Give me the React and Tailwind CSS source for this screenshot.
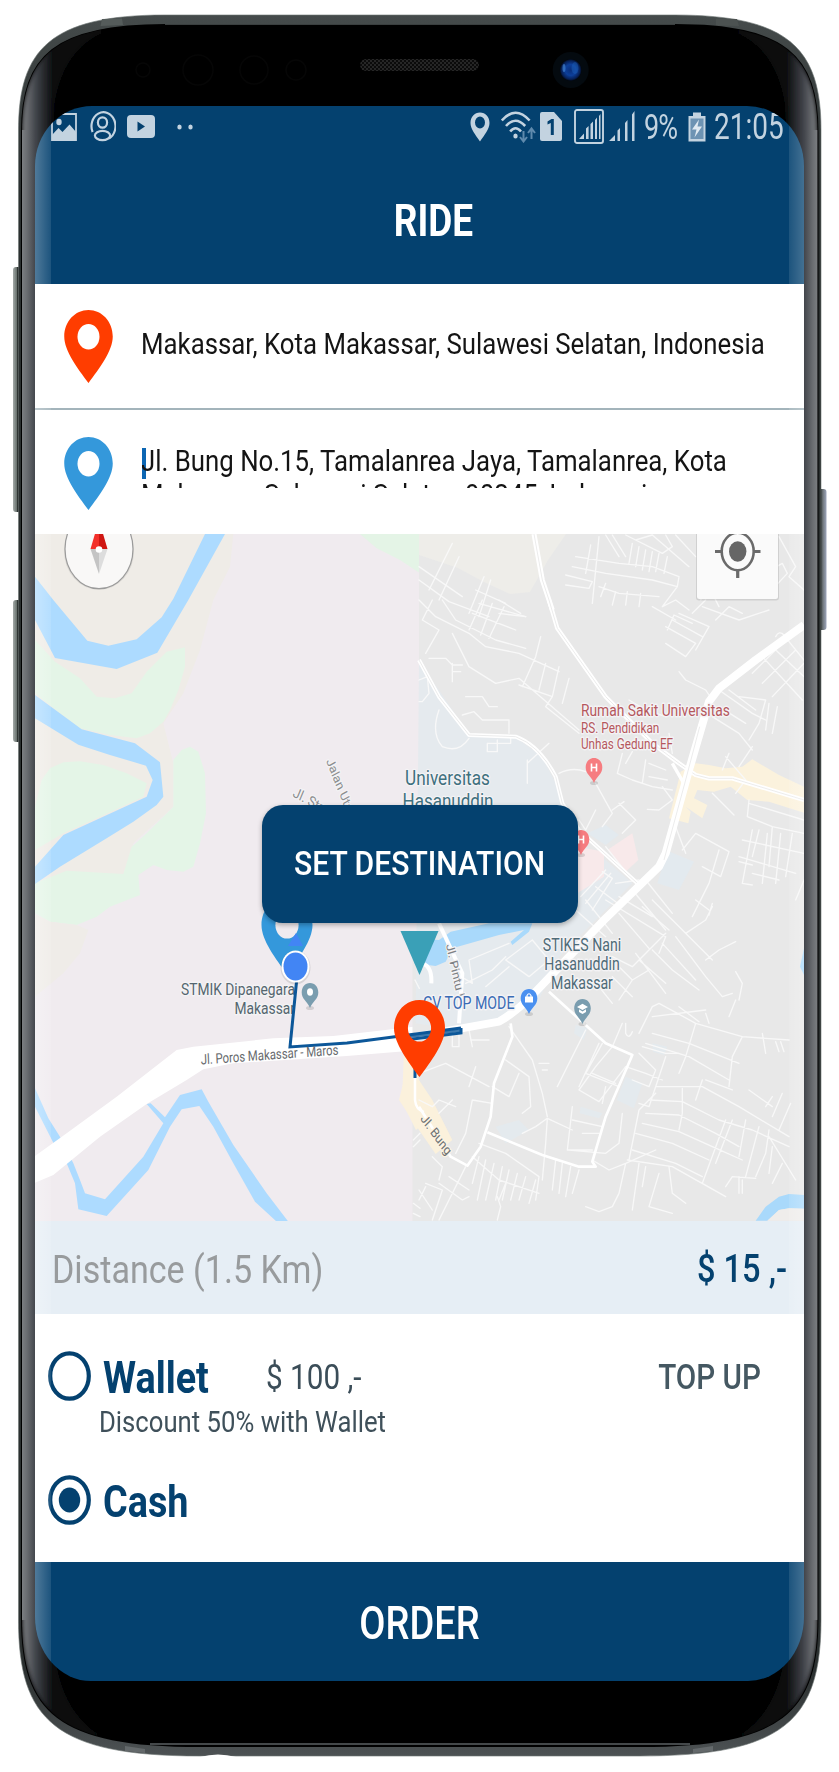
import React from "react";

const ROBOTO = "font-[Roboto,'Liberation_Sans',sans-serif]";

function PinShape({ x = 0, y = 0, w = 48.5, h = 73, fill, hole = "#ffffff" }) {
  return (
    <g transform={`translate(${x} ${y}) scale(${w / 48.5} ${h / 73})`}>
      <path
        d="M24.25 0C10.9 0 0 11.4 0 26.5C0 41 13.5 58.5 24.25 73C35 58.5 48.5 41 48.5 26.5C48.5 11.4 37.6 0 24.25 0Z"
        fill={fill}
      />
      <ellipse cx="24.25" cy="26.7" rx="11" ry="12.7" fill={hole} />
    </g>
  );
}

function PhoneFrame() {
  const outer =
    "M18.5 130C18.5 50 50 15 165 15H675C790 15 821 50 821 130V1620C821 1720 784 1756 640 1756H200C55 1756 18.5 1720 18.5 1620Z";
  const inner =
    "M22 132C22 56 55 25 165 25H675C785 25 817.5 56 817.5 132V1618C817.5 1712 782 1746 640 1746H200C58 1746 22 1712 22 1618Z";
  const glow =
    "M22 132C22 72 45 30 112 29C75 42 52 72 52 140V1610C52 1680 68 1718 106 1739C46 1728 22 1690 22 1618Z";
  return (
    <svg className="absolute left-0 top-0 h-[1772px] w-[839px]" viewBox="0 0 839 1772">
      <defs>
        <linearGradient id="edge" gradientUnits="userSpaceOnUse" x1="22" x2="54" y1="0" y2="0">
          <stop offset="0" stopColor="#7b7e81" />
          <stop offset="0.15" stopColor="#6a6d71" />
          <stop offset="0.42" stopColor="#42454b" />
          <stop offset="1" stopColor="#08090a" />
        </linearGradient>
        <linearGradient id="rim" x1="0" x2="0" y1="0" y2="1">
          <stop offset="0" stopColor="#454b4b" />
          <stop offset="0.1" stopColor="#2b3030" />
          <stop offset="0.95" stopColor="#2b3030" />
          <stop offset="1" stopColor="#4d5254" />
        </linearGradient>
        <linearGradient id="btn" x1="0" x2="1" y1="0" y2="0">
          <stop offset="0" stopColor="#a4aaa8" />
          <stop offset="0.45" stopColor="#6b7470" />
          <stop offset="0.6" stopColor="#1c201f" />
          <stop offset="1" stopColor="#3a403e" />
        </linearGradient>
        <linearGradient id="btnR" x1="1" x2="0" y1="0" y2="0">
          <stop offset="0" stopColor="#9da6bb" />
          <stop offset="0.45" stopColor="#6d7478" />
          <stop offset="0.7" stopColor="#15181a" />
          <stop offset="1" stopColor="#2a2e30" />
        </linearGradient>
        <radialGradient id="lens">
          <stop offset="0" stopColor="#0a2f7c" />
          <stop offset="0.5" stopColor="#0d3f9a" />
          <stop offset="0.85" stopColor="#061f55" />
          <stop offset="1" stopColor="#02060c" />
        </radialGradient>
        <filter id="soft" x="-20%" width="140%" y="-2%" height="104%">
          <feGaussianBlur stdDeviation="2" />
        </filter>
        <pattern id="mesh" width="4" height="4" patternUnits="userSpaceOnUse">
          <rect width="4" height="4" fill="#262626" />
          <rect width="2" height="2" fill="#0b0b0b" />
          <rect x="2" y="2" width="2" height="2" fill="#0b0b0b" />
        </pattern>
        <clipPath id="innerClip">
          <path d={inner} />
        </clipPath>
      </defs>
      <rect x="13" y="267" width="8" height="245" rx="3" fill="url(#btn)" />
      <rect x="13" y="600" width="8" height="142" rx="3" fill="url(#btn)" />
      <rect x="818" y="489" width="8.5" height="141" rx="3" fill="url(#btnR)" />
      <path d={outer} fill="url(#rim)" />
      <path d={outer} fill="none" stroke="#6c7573" strokeWidth="1" opacity="0.6" />
      <path d="M102 19L122 18.5L123 25L100.500 26Z" fill="#555c5b" />
      <path d="M716 18.5L737 19L739 26L716 25.500Z" fill="#4c5251" />
      <path d="M125 1746L145 1749L145 1753L125 1751Z" fill="#64696b" />
      <path d="M693 1749L713 1746L713 1751L693 1753Z" fill="#64696b" />
      <path d="M200 1757Q218 1752 236 1757Z" fill="#ffffff" />
      <path d={inner} fill="#000000" stroke="#000000" strokeWidth="2" />
      <g clipPath="url(#innerClip)">
        <path d={glow} fill="url(#edge)" filter="url(#soft)" />
        <path d={glow} fill="url(#edge)" filter="url(#soft)" transform="translate(839.500 0) scale(-1 1)" />
        <rect x="22" y="130" width="14" height="1490" fill="url(#edge)" />
        <rect x="22" y="130" width="14" height="1490" fill="url(#edge)" transform="translate(839.500 0) scale(-1 1)" />
      </g>
      <path d="M165 24.500H675" stroke="#3a3f3f" strokeWidth="1" />
      <path d="M150 1744H690" stroke="#5b6063" strokeWidth="1.500" />
      <rect x="360" y="59" width="119" height="12" rx="6" fill="url(#mesh)" />
      <g fill="none" stroke="#060606" strokeWidth="1.500">
        <circle cx="143" cy="70" r="7" />
        <circle cx="198" cy="70" r="15" />
        <circle cx="254" cy="70" r="14" />
        <circle cx="296" cy="70" r="10" />
      </g>
      <circle cx="570.700" cy="70" r="18" fill="#040a0f" />
      <circle cx="570.700" cy="70" r="11" fill="url(#lens)" />
      <ellipse cx="575" cy="68" rx="3.500" ry="6" fill="#1e63bd" opacity="0.45" />
      <ellipse cx="564" cy="68" rx="1.500" ry="4" fill="#4a8fe0" opacity="0.6" />
    </svg>
  );
}

function StatusBar() {
  const c = "#c3d3e0";
  const bg = "#04416f";
  return (
    <div className="flex h-[41px] items-center pl-[16px] pr-[19px] text-[#c3d3e0]">
      <svg className="h-[28px] w-[26px] shrink-0" viewBox="0 0 26 28">
        <path d="M1 1H25V27H1Z" fill="none" stroke={c} strokeWidth="1.800" />
        <ellipse cx="8" cy="9" rx="2.700" ry="3.200" fill={c} />
        <path d="M1 27V22L7.500 15L11.500 19L18.500 11.500L25 19V27Z" fill={c} />
      </svg>
      <svg className="ml-[12px] h-[31px] w-[27px] shrink-0" viewBox="0 0 27 31">
        <path d="M3.600 21A12 13.900 0 1 1 20 27.500" fill="none" stroke={c} strokeWidth="2.200" />
        <ellipse cx="13.500" cy="11.500" rx="4.600" ry="5.200" fill="none" stroke={c} strokeWidth="2.200" />
        <ellipse cx="13.500" cy="24.500" rx="7.600" ry="4.600" fill="none" stroke={c} strokeWidth="2.200" />
      </svg>
      <svg className="ml-[11px] h-[23px] w-[28px] shrink-0" viewBox="0 0 28 23">
        <rect width="28" height="23" rx="4" fill={c} />
        <path d="M10.500 6.500L18 11.500L10.500 16.500Z" fill={bg} />
      </svg>
      <svg className="ml-[22px] h-[6px] w-[16px] shrink-0" viewBox="0 0 16 6">
        <ellipse cx="2.500" cy="3" rx="2.200" ry="2.600" fill={c} />
        <ellipse cx="13.500" cy="3" rx="2.200" ry="2.600" fill={c} />
      </svg>
      <svg className="ml-auto h-[30px] w-[20px] shrink-0" viewBox="0 0 20 30">
        <path
          fillRule="evenodd"
          d="M10 0.500C4.500 0.500 0.500 5 0.500 11C0.500 17 5.500 23 10 29.500C14.500 23 19.500 17 19.500 11C19.500 5 15.500 0.500 10 0.500ZM10 4.500A5 6 0 1 1 10 16.500A5 6 0 1 1 10 4.500Z"
          fill={c}
        />
      </svg>
      <svg className="ml-[11px] h-[32px] w-[35px] shrink-0" viewBox="0 0 35 32">
        <g fill="none" stroke={c} strokeWidth="2.600">
          <path d="M0.800 9.500Q14.500 -6 28.600 9.500" />
          <path d="M5 15Q14.500 4.500 24.200 15" />
          <path d="M9.200 20.500Q14.500 14 20 20.500" />
        </g>
        <ellipse cx="14.500" cy="25" rx="2.200" ry="2.500" fill={c} />
        <g stroke="#5f8aad" strokeWidth="2" fill="none">
          <path d="M22.500 20V30M19 26L22.500 30.500L26 26" />
          <path d="M30.500 28V18M27 22L30.500 17.500L34 22" />
        </g>
      </svg>
      <svg className="ml-[4px] h-[29px] w-[22px] shrink-0" viewBox="0 0 22 29">
        <path d="M2 0H14L22 9V27Q22 29 20 29H2Q0 29 0 27V2Q0 0 2 0Z" fill={c} />
        <path d="M7.500 9.500L11.500 7H13.800V23H10.800V11L7.500 12.500Z" fill={bg} />
      </svg>
      <svg className="ml-[12px] h-[35px] w-[30px] shrink-0" viewBox="0 0 30 35">
        <rect x="1" y="1" width="28" height="33" rx="2" fill="none" stroke={c} strokeWidth="1.900" />
        <path d="M5 30L10 24.500V30ZM12 30V19.500L14.600 17V30ZM16.500 30V15L19 12.500V30ZM21 30V11L23 8.500V30ZM25 30V7L26.500 5V30Z" fill={c} />
      </svg>
      <svg className="ml-[5px] h-[31px] w-[26px] shrink-0" viewBox="0 0 26 31">
        <path d="M0 30L6 24V30ZM8.500 30V19.500L11 17V30ZM16 30V12L18.500 9V30ZM23 30V3.500L25.500 0V30Z" fill={c} />
      </svg>
      <span className="ml-[9px] w-[36px] shrink-0 scale-y-[1.32] whitespace-nowrap text-[27px] leading-[28px] tracking-[-1px]">
        9%
      </span>
      <svg className="ml-[8px] h-[30px] w-[18px] shrink-0" viewBox="0 0 18 30">
        <path d="M0.500 4H5V0.500H13V4H17.500V29.500H0.500Z" fill={c} />
        <path d="M2.500 6.500H15.500V27H2.500Z" fill="#6d93b3" />
        <path d="M11 7.500L4 17.500H8.500L6.500 25.500L14 14.500H9.500Z" fill="#dfe9f1" />
      </svg>
      <span className="ml-[8px] w-[71px] shrink-0 scale-y-[1.32] whitespace-nowrap text-[28px] leading-[28px]">
        21:05
      </span>
    </div>
  );
}

function Label({ x, y, size, sy = 1.25, fill, anchor = "start", rotate = 0, weight = 400, halo = "#f4f3f5", children }) {
  return (
    <text
      transform={`translate(${x} ${y}) scale(1 ${sy}) rotate(${rotate})`}
      fontSize={size}
      fontWeight={weight}
      textAnchor={anchor}
      fill={fill}
      stroke={halo}
      strokeWidth="2.200"
      strokeLinejoin="round"
      paintOrder="stroke"
    >
      {children}
    </text>
  );
}

function PoiPin({ x, y, fill, children }) {
  return (
    <g transform={`translate(${x} ${y})`}>
      <ellipse cx="0" cy="25" rx="4" ry="2" fill="#000000" opacity="0.12" />
      <path d="M0 0C-5 0 -8.300 4 -8.300 9.500C-8.300 16 -3 18 0 25C3 18 8.300 16 8.300 9.500C8.300 4 5 0 0 0Z" fill={fill} />
      {children}
    </g>
  );
}

function MapView() {
  return (
    <svg className="h-[687px] w-[769px]" viewBox="35 534 769 687">
      <rect x="35" y="534" width="769" height="687" fill="#f0ebef" />

      <g transform="translate(0 280) scale(0.33333)">
        <path d="M105 762H700L690 860L640 960L600 1110L550 1240L490 1330L520 1450L520 1580L400 1690L380 1780L105 1900Z" fill="#efece7" />
        <path d="M1080 762H1260V880L1200 840L1130 805Z" fill="#e4f4e6" />
      </g>
      <g transform="translate(0 600) scale(0.33333)">
        <path d="M105 120L165 185L240 235L290 290L345 295L395 280L440 215L500 155L555 142L555 200L535 270L510 330L490 365L450 400L410 415L330 405L240 385L180 340L105 280Z" fill="#e4f5e7" />
        <path d="M150 505L190 487L240 484L310 495L380 520L440 550L430 590L300 650L190 700L105 750V620L125 540Z" fill="#e4f5e7" />
        <path d="M545 450L570 440L595 455L615 520L618 640L600 730L580 800L550 815L500 810L460 795L415 825L420 885L330 920L290 950L230 975L150 965L105 940V850L200 812L370 822L395 740L440 700L520 620L520 480Z" fill="#e4f5e7" />
        <path d="M105 942L150 965L230 975L265 990L240 1060L190 1120L105 1190Z" fill="#efece8" />
        <path d="M105 -70L160 0L262 122L325 137L410 118L485 52L520 -4L615 -198L675 -198L565 0L472 158L350 207L165 174L105 60Z" fill="#addbff" />
        <path d="M105 285L245 388L405 430L480 487L490 590L470 615L400 665L320 715L180 800L105 852V800L190 705L440 590L458 540L438 497L330 465L235 434L105 355Z" fill="#addbff" />
      </g>

      <g transform="translate(0 900) scale(0.33333)">
        <path d="M105 565L145 655L180 710L220 790L240 840L255 880L315 898L430 770L490 670L440 612L452 610L495 652L540 585L605 568L625 605L700 735L800 880L865 965H830L765 905L700 790L640 680L598 618L545 628L510 680L445 810L320 948L235 928L225 850L200 790L160 728L105 620Z" fill="#addbff" />
        <path d="M105 768L200 700L350 590L530 450L580 440L820 415L1000 408L1260 378V450L1040 468L700 490L610 508L560 540L440 612L300 710L160 825L105 848Z" fill="#ffffff" />
      </g>

      <path d="M419 534H804V1221H412.500V960H419Z" fill="#e8e8e8" />
      <path d="M419 534H566L548 560L530 592L510 594L484 582L458 568L419 555Z" fill="#eeede9" />

      <g transform="translate(419 600) scale(0.33333)">
        <path d="M0 190L60 270L150 405L290 412L370 470L415 560L440 700L560 780L640 850L420 1070L350 1220L120 1290L-10 1270Z" fill="#e5eaee" />
        <path d="M830 490L870 495L920 505L970 500L1000 478L1080 525L1155 560V638L1050 605L985 600L935 560L885 575L835 570L825 595L865 615L850 655L800 620L815 635L808 670L750 655L785 515Z" fill="#fbf2dd" />
        <path d="M475 740L555 755V830L475 880ZM565 750L640 700L658 780L620 815Z" fill="#f8e9ea" />
        <path d="M505 700L560 675L600 705L560 735ZM745 752L825 785L780 870L715 850Z" fill="#e3eaef" />
      </g>
      <g transform="translate(419 900) scale(0.33333)">
        <path d="M95 95L210 70H340L330 95L280 135L275 125L315 90L240 105L100 145L80 185L50 198L-15 190V115L60 120Z" fill="#a9d9fb" />
        <path d="M1155 145L1143 200L1155 225Z" fill="#a9d9fb" />
        <path d="M1010 962L1040 920L1080 890L1110 882L1155 885V926L1110 925L1080 930L1045 962Z" fill="#a9d9fb" />
        <path d="M1045 962L1080 930L1110 925L1155 926V962Z" fill="#efedeb" />
        <path d="M-30 480L0 540L40 600L100 720L50 762L0 690L-60 600Z" fill="#fbf1dc" />
        <path d="M620 530L670 550L645 625L593 600ZM700 430L745 440L735 465L702 455ZM485 620L550 640L540 655L482 640ZM470 375L505 385L495 420L465 400ZM230 680L300 660L330 690L260 730Z" fill="#e4eaee" />
      </g>
      <path d="M404 1050L412 1050L428 1120L416 1130L402 1102Z" fill="#fbf1dc" />

      <g fill="none" stroke="#f8f8f8" strokeWidth="4" strokeLinejoin="round" strokeLinecap="round">
        <g transform="translate(419 280) scale(0.33333)">
          <path d="M100 790L30 930M120 830L60 960M0 860L130 950M195 890L150 1000M215 900L180 1010M0 900L90 965L210 1010M170 930L260 970M240 1000L320 1010" />
          <path d="M540 770L520 970M515 795L500 880M470 830L600 850L700 860L780 890M460 860L560 880L700 900L775 920M440 885L520 905L510 925L440 915M540 920L600 940L720 950M560 910L545 950M590 935L580 975M625 935L620 975M665 940L660 980M560 765L600 830M580 765L620 830M640 790L630 850M660 800L650 860M680 810L670 870M700 815L690 875M720 820L710 875M745 830L735 880M620 765L730 820L760 800L740 765M780 890L775 920L730 980L770 960L810 990M700 765L810 860M770 765L830 830M650 780L700 765M845 960L900 870L1000 840M1080 770L1130 860L1110 890L1155 930M900 980L860 900M1000 900L1090 850L1105 880L1040 950" />
        </g>
        <g transform="translate(419 600) scale(0.33333)">
          <path d="M0 0L50 50L150 100L200 140L300 160L420 215M40 0L10 60L60 90L20 160M70 0L110 60L230 120L320 145M150 90L190 0M185 105L220 10M210 115L255 20M160 40L290 90M180 10L320 50M240 0L305 40M365 110L350 170L310 260M380 190L360 270M420 200L400 290M450 235L430 310M100 100L150 200L230 250L300 235L480 390M300 255L400 290L380 320L480 400M30 175H80L100 195H130M100 190V245M100 215H125M140 290H190L210 320H235M130 345L165 335L190 360H270V400M205 430V455H235V420M205 430H275V415M60 330Q35 400 70 440Q120 460 150 415M325 480V550M390 430L325 490M0 240L25 230L30 280L10 305H0" />
          <path d="M740 80L830 130L800 170L740 130M760 60L850 110M780 40L870 80L830 150M745 90L765 45L820 70M700 20L770 60M820 40L860 0M850 20L960 60L1050 30M890 60L930 20L970 40M780 215L800 240L860 270L880 300M1030 170L1150 300M1060 140L1155 230M1090 100L1155 180M1070 110Q1080 90 1095 105M1000 220L1090 130M1030 250L1130 150M1060 290L1155 190M900 270L1000 340L1040 360M930 270L1010 330M960 290L1040 300L1020 370L990 420M880 350L960 400L1000 450M900 320L980 370M1050 310L1040 390M1075 320L1060 400M420 520Q460 500 500 515M530 550L580 640L550 680M600 610L650 660L610 700M580 630L615 605M480 660L500 690L530 630M610 460L595 520L640 540L700 560L760 570M640 455L620 490M680 480L670 550M690 490L740 510M750 400L760 460M630 300L680 330L740 350M690 530L745 540" />
          <path d="M730 560L760 600L720 630L685 628M920 470L980 540L950 580M930 460L910 510M960 500L1000 440M880 580L945 645M990 600L985 650L1060 680L1155 700M990 610L1155 660M770 680L800 760M830 700L930 755L905 830L850 800M830 700L790 750M900 750L870 850L820 950M1000 690L970 850M1020 690L1000 770M1045 700L1030 850M1060 680L1050 800M1085 700L1070 850M1120 700L1100 830M970 720L1155 760M960 770L1130 820M1000 820L1080 840M960 785L1000 795M970 850L1000 855" />
          <path d="M560 810L485 890M575 820L500 910M550 815L580 835L520 930M530 860L610 920M560 740L640 840M590 850L660 840M600 890L700 950M640 870L740 990M680 840L760 940M1130 900L1155 840" />
        </g>
        <g transform="translate(419 900) scale(0.33333)">
          <path d="M500 0L580 100M470 30L560 110M560 0L740 110L720 160M600 40L690 145M740 100L640 200L580 170M670 20L750 90M700 150L760 210L840 270M650 160L740 280M700 0L800 100L860 60L880 20M730 130L830 240M770 110L860 230L910 290L940 280M790 90L880 180M600 200L640 240L600 300M540 260L580 310M580 230L640 290M660 180L740 250M640 240L690 210M860 180L900 150L950 125M880 10L870 45M830 0L870 30M950 215L970 250L960 300M950 300L930 350M660 400L700 320L720 310L830 370L970 410L940 470L930 560M700 350L860 330M830 370L800 470L780 520M700 400L810 430L960 490M680 430L810 470L930 540M780 320L840 365M970 410L1110 420M1030 400L1040 460M1070 425L1080 455M1085 425L1095 455M860 340L870 370" />
          <path d="M660 460L710 510L690 560L640 540M670 440L740 460L780 460M620 500L680 520L730 540M740 470L710 560H850L960 620L1110 710M710 560L690 620L660 610M690 600L790 605L900 660L1000 690L1110 740M680 640L780 645L890 700L960 740M670 670L780 695L880 740L970 780M650 700L760 730L870 780M640 750L770 790L850 830M625 780L760 800L920 890M790 565L790 640L780 690M850 540L830 600M860 540L940 570M920 660L850 850M940 660L890 790M980 660L960 770M1020 680L980 830M1050 690L1040 760L1010 830M1050 710L1130 840M1060 740L1050 820M1090 790L1060 850M850 850L920 890M920 860L940 830L1010 835M960 830V880M970 840V880M1060 590L1040 620M1090 580L1060 650M1115 610L1080 690M990 570L1060 620" />
          <path d="M610 370L580 440L530 500L480 570L540 605L620 500M500 390L415 560M550 430L500 520L600 560M520 520L590 550M560 560L550 610M620 370V400Q630 420 640 395M540 430L480 560M270 380L340 480L370 580L385 650M260 480L330 530L335 620L310 640M220 560L270 590L300 520M385 655L350 680L310 700M385 655L380 730L370 840M385 655L460 690M460 620L445 750H520M460 660L550 680M540 700H490M610 640L600 730L560 760L450 750M520 780L570 810L620 790L710 750M620 790L600 880L580 920L540 935L500 920M660 790L640 930M680 800L670 860M720 820L690 920L760 940M750 800L760 880L800 910M630 780L660 630L710 580M360 490H390M370 510H385M120 400V440H100V400M150 390L160 440M155 420H210M0 520L80 490L210 560M150 560L170 500M160 600L220 610M160 600L140 700L110 760" />
          <path d="M180 770L160 850M200 780L175 900M225 790L200 900M250 800L230 900M270 810L250 900M295 820L275 900M320 830L300 900M350 840L330 910M180 730L260 760L360 830L350 900M160 770L240 840L360 880M410 780L400 870M430 790L420 880M455 800L440 890M480 810L460 880M140 800L90 900L60 960M90 830L150 870M60 850L130 900L150 890M20 850L70 870L40 960M20 860L0 900M0 870L40 930M40 770L70 800L60 840M240 900L260 850M235 960L245 920L235 890M0 600L40 620L60 600L110 620M60 640L100 600M260 180L340 120L390 180L330 230ZM140 250L220 210L260 170M110 220L160 250L150 180L270 130M200 260L270 200" />
        </g>
        <g transform="translate(0 900) scale(0.33333)">
          <path d="M1240 720L1260 700M1240 740L1260 720M1240 910L1260 925M1240 940L1260 950M1245 240L1258 265" />
        </g>
      </g>

      <g fill="none" strokeLinejoin="round">
        <g transform="translate(419 280) scale(0.33333)">
          <path d="M345 762L370 900L400 990" stroke="#ffffff" strokeWidth="15" />
          <path d="M345 762L370 900L400 990" stroke="#ececec" strokeWidth="3" />
        </g>
        <g transform="translate(419 600) scale(0.33333)" stroke="#ffffff">
          <path d="M390 0L415 85L560 290L700 430L780 490L830 525L870 535H940L1155 600" strokeWidth="13" />
          <path d="M390 0L415 85L560 290L700 430L780 490L830 525L870 535H940L1155 600" stroke="#ececec" strokeWidth="3" />
          <path d="M0 180L60 290L150 405L290 410Q360 435 410 530L430 610L480 690L655 850" strokeWidth="12" />
          <path d="M0 180L60 290L150 405L290 410Q360 435 410 530L430 610L480 690L655 850" stroke="#ececec" strokeWidth="3" />
          <path d="M1155 75L1010 180L900 265L870 305L810 510L740 760L720 800L560 955L350 1175Q300 1230 240 1265L-10 1310" strokeWidth="24" />
          <path d="M845 370L800 530L740 770L710 810L660 855M760 490L800 560" stroke="#ffffff" strokeWidth="10" />
          <path d="M842 380L800 540L735 780" stroke="#ececec" strokeWidth="3" />
        </g>
        <g transform="translate(419 900) scale(0.33333)" stroke="#ffffff">
          <path d="M0 190Q40 190 37 250M60 70L130 220L120 370" strokeWidth="12" />
          <path d="M390 275L560 430L640 465L560 650L520 785L530 800L480 800L370 765L205 697M275 370L280 410L225 550L215 650L185 740L145 797L95 770L0 620" strokeWidth="8" />
        </g>
        <path d="M415 1078V1100Q416 1110 424 1112" stroke="#ffffff" strokeWidth="2.500" />
      </g>

      <Label x="326" y="761" size="11.600" sy="1.170" rotate="65" fill="#8b8d8f">Jalan Uta</Label>
      <Label x="292" y="796" size="12.500" sy="1.170" rotate="26" fill="#8b8d8f">Jl. Str</Label>
      <Label x="447.500" y="785" size="17.200" sy="1.170" anchor="middle" fill="#3e707e">Universitas</Label>
      <Label x="448" y="808" size="17" sy="1.170" anchor="middle" fill="#3e707e">Hasanuddin</Label>

      <Label x="581" y="716" size="13.800" fill="#b5585d">Rumah Sakit Universitas</Label>
      <Label x="581" y="733" size="11.800" fill="#b5585d">RS. Pendidikan</Label>
      <Label x="581" y="749" size="11.700" fill="#b5585d">Unhas Gedung EF</Label>

      <PoiPin x={594} y={758} fill="#f67c80">
        <path d="M-2.500 5.500V13.500M2.500 5.500V13.500M-2.500 9.500H2.500" stroke="#ffffff" strokeWidth="1.600" />
      </PoiPin>
      <PoiPin x={581} y={830} fill="#f67c80">
        <path d="M-2.500 5.500V13.500M2.500 5.500V13.500M-2.500 9.500H2.500" stroke="#ffffff" strokeWidth="1.600" />
      </PoiPin>

      <Label x="582" y="951" size="14.100" anchor="middle" fill="#4f6b78">STIKES Nani</Label>
      <Label x="582" y="970" size="14.100" anchor="middle" fill="#4f6b78">Hasanuddin</Label>
      <Label x="582" y="989" size="14.100" anchor="middle" fill="#4f6b78">Makassar</Label>
      <PoiPin x={582.500} y={999} fill="#7a9daf">
        <path d="M-5.500 8L0 4.800L5.500 8L0 11ZM-3.500 10.300V13L0 15L3.500 13V10.300L0 12.500Z" fill="#ffffff" />
      </PoiPin>

      <Label x="446" y="945" size="11.300" sy="1.170" rotate="76" fill="#7d8184">Jl. Pintu I</Label>
      <Label x="514.500" y="1009" size="14.200" anchor="end" fill="#3a6cb5">CV TOP MODE</Label>
      <PoiPin x={529} y={989} fill="#4a90f0">
        <path d="M-4 7.500H4V13.500H-4Z" fill="#ffffff" />
        <path d="M-2 8V6.500Q0 3 2 6.500V8" fill="none" stroke="#ffffff" strokeWidth="1.200" />
      </PoiPin>

      <Label x="295" y="995" size="13.800" anchor="end" fill="#54666f">STMIK Dipanegara</Label>
      <Label x="295" y="1013.500" size="13.800" anchor="end" fill="#54666f">Makassar</Label>
      <PoiPin x={310} y={983} fill="#7a9daf">
        <ellipse cx="0" cy="9" rx="3" ry="3.700" fill="#ffffff" />
      </PoiPin>
      <Label x="420" y="1119" size="11.500" sy="1.170" rotate="50" fill="#6d7073" halo="#fbf3e2">Jl. Bung</Label>

      <g fill="none" stroke="#0c5799">
        <path d="M296.500 982L290 1047L347 1043L393 1037L461 1028" strokeWidth="3" />
        <path d="M405 1040L461 1033V1028" strokeWidth="3" />
        <path d="M405 1037L461 1030.500" strokeWidth="3" opacity="0.8" />
        <path d="M415 1065V1078" strokeWidth="3" />
      </g>
      <Label x="201" y="1064.500" size="11.350" rotate="-3.300" fill="#66696c" halo="none">Jl. Poros Makassar - Maros</Label>

      <PinShape x={261.500} y={897} w={51} h={77} fill="#3498db" hole="#f0ebef" />
      <path d="M288 946L296 933L303 946Z" fill="#4285f4" />
      <ellipse cx="295.500" cy="967.500" rx="15" ry="17" fill="#000000" opacity="0.1" />
      <ellipse cx="295.500" cy="966.500" rx="14" ry="16" fill="#ffffff" />
      <ellipse cx="295.500" cy="966.500" rx="12" ry="14" fill="#4285f4" />

      <path d="M400.500 931H438.500L419.500 975Z" fill="#3aa0b7" />

      <g>
        <ellipse cx="99" cy="551" rx="35" ry="39" fill="#000000" opacity="0.08" />
        <ellipse cx="99" cy="549" rx="34" ry="39.700" fill="#f9f8f7" stroke="#9b9b9b" strokeWidth="1.200" />
        <path d="M90.500 549L99 520V549Z" fill="#f3302a" />
        <path d="M107.500 549L99 520V549Z" fill="#cf1712" />
        <path d="M90.500 549L99 574V549Z" fill="#c4c4c4" />
        <path d="M107.500 549L99 574V549Z" fill="#dddddd" />
        <circle cx="99" cy="549.500" r="3.300" fill="#ffffff" />
      </g>

      <g>
        <rect x="696" y="520" width="83" height="80.500" rx="3" fill="#000000" opacity="0.1" />
        <rect x="697" y="520" width="81" height="79" rx="2.500" fill="#fafafa" />
        <ellipse cx="737.700" cy="551.500" rx="16" ry="18.700" fill="none" stroke="#6a6a6a" strokeWidth="2.600" />
        <ellipse cx="737.700" cy="551.500" rx="8.700" ry="10.200" fill="#666666" />
        <path d="M715 551.500H722M753.500 551.500H760.500M737.700 570V578" stroke="#6a6a6a" strokeWidth="3.200" />
      </g>

      <path
        fillRule="evenodd"
        transform="translate(394 1000) scale(1.0515 1.0548)"
        d="M24.250 0C10.900 0 0 11.400 0 26.500C0 41 13.500 58.500 24.250 73C35 58.500 48.500 41 48.500 26.500C48.500 11.400 37.600 0 24.250 0ZM24.250 14A11 12.700 0 1 0 24.250 39.400A11 12.700 0 1 0 24.250 14Z"
        fill="#ff3d00"
      />
    </svg>
  );
}

function RadioMark({ checked }) {
  return (
    <svg className="h-[50px] w-[43px] shrink-0" viewBox="0 0 43 50">
      <ellipse cx="21.500" cy="25" rx="19.300" ry="22.700" fill="none" stroke="#04416f" strokeWidth="4.200" />
      {checked && <ellipse cx="21.500" cy="25" rx="10.700" ry="12.500" fill="#04416f" />}
    </svg>
  );
}

export default function App() {
  return (
    <div className={`relative h-[1772px] w-[839px] overflow-hidden bg-white pl-[35px] pt-[106px] ${ROBOTO}`}>
      <PhoneFrame />
      <main className="relative flex h-[1575px] w-[769px] flex-col overflow-hidden [border-radius:57px_57px_56px_56px/60px_60px_64px_64px]">
        <header className="h-[178px] bg-[#04416f]">
          <StatusBar />
          <h1 className="pl-[28px] pt-[53px] text-center text-[37px] font-bold leading-[44px] text-white">
            <span className="inline-block scale-y-[1.18]">RIDE</span>
          </h1>
        </header>

        <section className="flex h-[126px] items-center border-b-[2px] border-[#a3b4bb] bg-white pl-[29px]">
          <svg className="mt-px h-[73px] w-[49px] shrink-0" viewBox="0 0 48.5 73">
            <PinShape fill="#ff3d00" />
          </svg>
          <p className="mb-[5px] ml-[28px] origin-center scale-y-[1.13] whitespace-nowrap text-[25.8px] leading-[30px] text-[#141414]">
            Makassar, Kota Makassar, Sulawesi Selatan, Indonesia
          </p>
        </section>

        <section className="flex h-[124px] bg-white pl-[29px]">
          <svg className="mt-[27px] h-[73px] w-[49px] shrink-0" viewBox="0 0 48.5 73">
            <PinShape fill="#3498db" />
          </svg>
          <div className="ml-[29px] mt-[34px] h-[44px] w-[640px] overflow-hidden">
            <div className="flex">
              <span className="mt-[4px] h-[31px] w-[4px] shrink-0 bg-[#0c66b3]" />
              <p className="-ml-[5px] origin-top scale-y-[1.13] whitespace-nowrap text-[25.8px] leading-[30px] text-[#141414]">
                Jl. Bung No.15, Tamalanrea Jaya, Tamalanrea, Kota
                <br />
                Makassar, Sulawesi Selatan 90245, Indonesia
              </p>
            </div>
          </div>
        </section>

        <section className="relative h-[687px] shrink-0">
          <MapView />
          <button className="absolute left-[226.500px] top-[271px] h-[118px] w-[316px] rounded-[21px] bg-[#04416f] text-[30.1px] font-medium text-white shadow-[0_2px_5px_rgba(0,0,0,0.3)]">
            <span className="inline-block scale-y-[1.13] whitespace-nowrap">SET DESTINATION</span>
          </button>
        </section>

        <section className="flex h-[93px] items-center justify-between bg-[#e6eef5] pl-[17px] pr-[17px]">
          <span className="mt-[4px] scale-y-[1.16] text-[34.1px] text-[#989b9d]">Distance (1.5 Km)</span>
          <span className="mt-[4px] scale-y-[1.2] text-[32.6px] font-medium text-[#04416f]">$ 15 ,-</span>
        </section>

        <section className="h-[248px] bg-white pl-[13px] pt-[37px]">
          <div className="flex h-[50px] items-center">
            <RadioMark />
            <span className="ml-[12px] mt-[4px] w-[163px] scale-y-[1.17] text-[37.8px] font-bold text-[#04416f]">Wallet</span>
            <span className="mt-[2px] scale-y-[1.17] text-[29.7px] text-[#3b4d58]">$ 100 ,-</span>
            <span className="ml-auto mr-[43px] mt-[2px] scale-y-[1.17] text-[29.700px] font-medium text-[#455862]">TOP UP</span>
          </div>
          <p className="ml-[51px] mt-[5px] origin-center scale-y-[1.17] whitespace-nowrap text-[25.700px] leading-[30px] text-[#3f505a]">
            Discount 50% with Wallet
          </p>
          <div className="mt-[39px] flex h-[50px] items-center">
            <RadioMark checked />
            <span className="ml-[12px] mt-[4px] scale-y-[1.17] text-[37.8px] font-bold text-[#04416f]">Cash</span>
          </div>
        </section>

        <button className="flex h-[119px] items-center justify-center bg-[#04416f] text-[38px] font-medium text-white">
          <span className="mt-[4px] scale-y-[1.2]">ORDER</span>
        </button>

        <div className="pointer-events-none absolute inset-y-0 left-0 w-[16px] bg-gradient-to-r from-white/30 to-white/10" />
        <div className="pointer-events-none absolute inset-y-0 right-0 w-[15px] bg-gradient-to-l from-white/25 to-white/10" />
      </main>
    </div>
  );
}
